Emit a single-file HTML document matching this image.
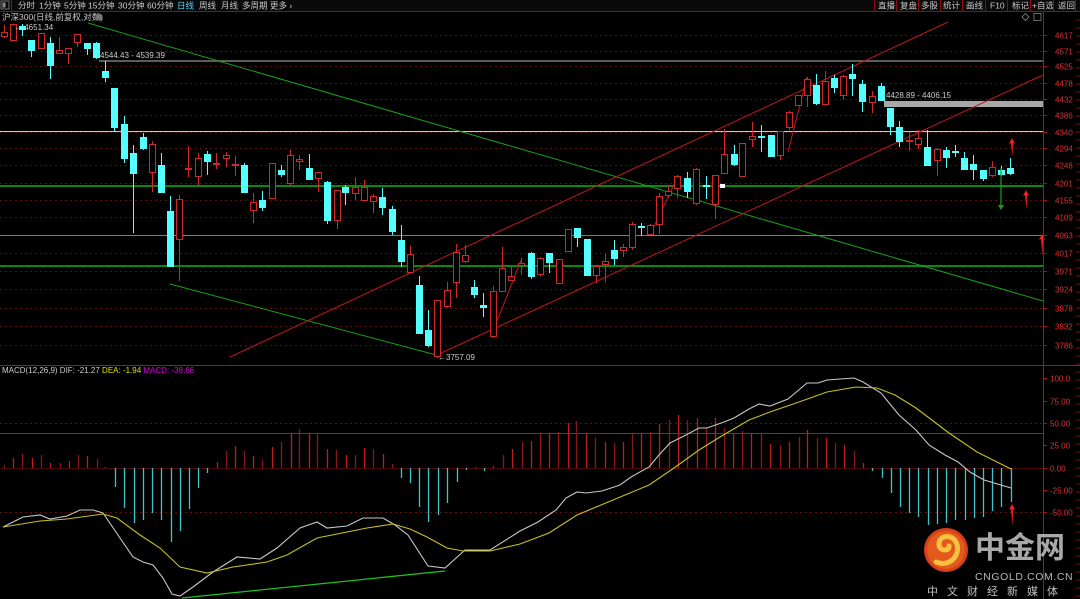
<!DOCTYPE html>
<html><head><meta charset="utf-8">
<style>
html,body{margin:0;padding:0;background:#000;}
body{width:1080px;height:599px;overflow:hidden;position:relative;font-family:"Liberation Sans","Noto Sans CJK SC",sans-serif;}
svg{position:absolute;left:0;top:0;}
</style></head>
<body>
<svg id="s" width="1080" height="599" xmlns="http://www.w3.org/2000/svg" font-family="Liberation Sans, Noto Sans CJK SC, sans-serif">
<rect width="1080" height="599" fill="#000"/>
<rect x="0" y="0" width="1080" height="11" fill="#0a0a0a"/>
<line x1="0" y1="11.5" x2="1080" y2="11.5" stroke="#8a1010"/>
<rect x="1" y="1" width="8" height="8" fill="none" stroke="#888" stroke-width="0.8"/>
<rect x="2.5" y="2.5" width="3" height="5" fill="#888"/>
<line x1="11.5" y1="0" x2="11.5" y2="11" stroke="#8a1010"/>
<g font-size="8.5" fill="#c8c8c8">
<text x="18" y="8.5">分时</text><text x="39" y="8.5">1分钟</text><text x="64" y="8.5">5分钟</text><text x="88" y="8.5">15分钟</text><text x="118" y="8.5">30分钟</text><text x="147" y="8.5">60分钟</text><text x="177" y="8.5" fill="#4fd8ff">日线</text><text x="199" y="8.5">周线</text><text x="221" y="8.5">月线</text><text x="242" y="8.5">多周期</text><text x="270" y="8.5">更多 ›</text>
<text x="878" y="8.5">直播</text><text x="900" y="8.5">复盘</text><text x="921" y="8.5">多股</text><text x="943" y="8.5">统计</text><text x="966" y="8.5">画线</text><text x="990" y="8.5">F10</text><text x="1012" y="8.5">标记</text><text x="1032" y="8.5">+自选</text><text x="1058" y="8.5">返回</text>
</g>
<g stroke="#8a1010"><line x1="874.5" y1="0" x2="874.5" y2="11"/><line x1="896.5" y1="0" x2="896.5" y2="11"/><line x1="918.5" y1="0" x2="918.5" y2="11"/><line x1="940.5" y1="0" x2="940.5" y2="11"/><line x1="962.5" y1="0" x2="962.5" y2="11"/><line x1="985.5" y1="0" x2="985.5" y2="11"/><line x1="1007.5" y1="0" x2="1007.5" y2="11"/><line x1="1030.5" y1="0" x2="1030.5" y2="11"/><line x1="1053.5" y1="0" x2="1053.5" y2="11"/><line x1="1075.5" y1="0" x2="1075.5" y2="11"/></g>
<text x="2" y="20" font-size="8.5" fill="#c8c8c8">沪深300(日线,前复权,对数)</text>
<circle cx="99" cy="17" r="3.5" fill="#777"/>
<path d="M1022 17 L1025.5 13.5 L1029 17 L1025.5 20.5Z" fill="none" stroke="#888" stroke-width="0.8"/>
<rect x="1034" y="13.5" width="7" height="7" fill="none" stroke="#888" stroke-width="0.8"/>
<g id="grid"></g>
<g id="main"></g>
<g id="macd"></g>
<line x1="1043.5" y1="12" x2="1043.5" y2="599" stroke="#b01010"/>
<line x1="0" y1="365.5" x2="1080" y2="365.5" stroke="#b01010"/>
<text x="2" y="373" font-size="8" fill="#ccc"><tspan fill="#ccc">MACD(12,26,9) DIF: -21.27 </tspan><tspan fill="#e0e000">DEA: -1.94 </tspan><tspan fill="#e000e0">MACD: -38.66</tspan></text>
<circle cx="946" cy="550" r="22" fill="#d8401a"/>
<circle cx="946" cy="550" r="19" fill="#e25a1c"/>
<path d="M936 562 C950 568 962 554 956 542 C951 533 938 536 939 545 C940 552 950 551 949 546" fill="none" stroke="#f6c040" stroke-width="5" stroke-linecap="round"/>
<text x="975" y="558" font-size="30" font-weight="bold" fill="#a8a8a8" font-family="Noto Sans CJK SC, sans-serif">中金网</text>
<text x="975" y="580" font-size="10.5" fill="#b8b8b8" letter-spacing="0.6">CNGOLD.COM.CN</text>
<text x="927" y="595" font-size="11" fill="#c0c0c0" letter-spacing="9" font-family="Noto Sans CJK SC, sans-serif">中文财经新媒体</text>
</svg>
<script>
var NS="http://www.w3.org/2000/svg";
function el(p,t,a,txt){var e=document.createElementNS(NS,t);for(var k in a)e.setAttribute(k,a[k]);if(txt!==undefined)e.textContent=txt;document.getElementById(p).appendChild(e);return e;}
var pl=[[4617,35],[4571,50.6],[4525,66.4],[4478,82.7],[4432,98.9],[4386,115.2],[4340,131.6],[4294,148.3],[4248,165.1],[4201,182.5],[4155,199.7],[4109,217],[4063,234.8],[4017,252.5],[3971,270.5],[3924,289],[3878,307.6],[3832,326.2],[3786,345]];
pl.forEach(function(p){var y=Math.round(p[1])+0.5;
el('grid','line',{x1:0,y1:y,x2:1043,y2:y,stroke:'#5a0c0c','stroke-dasharray':'2,3'});
el('grid','line',{x1:1043,y1:y,x2:1047,y2:y,stroke:'#b01010'});
el('grid','text',{x:1055,y:y+3,'font-size':8,fill:'#e03030'},String(p[0]));});
var ml=[[100,378],[75,401],[50,423],[25,445],['0.00',468],[-25,490],[-50,512]];
ml.forEach(function(p){var y=p[1]+0.5;var lab=(typeof p[0]==='string')?p[0]:p[0].toFixed(2).replace('100.00','100.0');
if(p[0]===50||p[0]===-50)el('grid','line',{x1:0,y1:y,x2:1043,y2:y,stroke:'#6a0c0c','stroke-dasharray':'2,3'});
if(p[0]==='0.00')el('grid','line',{x1:0,y1:y,x2:1043,y2:y,stroke:'#4a0808'});
el('grid','line',{x1:1043,y1:y,x2:1047,y2:y,stroke:'#b01010'});
el('grid','text',{x:1050,y:y+3,'font-size':8,fill:'#e03030'},lab);});
el('grid','line',{x1:0,y1:433.5,x2:1043,y2:433.5,stroke:'#c01010'});
el('main','line',{x1:99,y1:61,x2:1043,y2:61,stroke:'#7a7a7a','stroke-width':1.5});
el('main','rect',{x:884,y:101,width:159,height:6,fill:'#a8a8a8'});
el('main','line',{x1:0,y1:131.5,x2:1043,y2:131.5,stroke:'#d8d090'});
el('main','line',{x1:0,y1:186,x2:1043,y2:186,stroke:'#0a8a0a','stroke-width':2});
el('main','line',{x1:0,y1:235.5,x2:1043,y2:235.5,stroke:'#30b030'});
el('main','line',{x1:0,y1:266,x2:1043,y2:266,stroke:'#0a8a0a','stroke-width':2});
el('main','line',{x1:88,y1:23,x2:1043,y2:301,stroke:'#18a018'});
el('main','line',{x1:170,y1:284,x2:440,y2:356,stroke:'#18a018'});
el('main','line',{x1:230,y1:357,x2:948,y2:22,stroke:'#c01818'});
el('main','line',{x1:437,y1:355,x2:1043,y2:75,stroke:'#c01818'});
el('main','line',{x1:493,y1:331,x2:522,y2:258,stroke:'#c01818'});
el('main','line',{x1:650,y1:235,x2:678,y2:176,stroke:'#c01818'});
el('main','line',{x1:788,y1:152,x2:807,y2:77,stroke:'#c01818'});
var C=[[4,'r',32,36,25,38],[13,'r',24,40,24,41],[22,'c',26,29,24,36],[31,'c',40,50,40,57],[41,'r',33,48,33,48],[50,'c',43,65,37,79],[59,'r',50,53,37,53],[68,'r',48,53,48,64],[77,'r',34,42,34,47],[87,'c',43,48,43,55],[96,'c',43,57,42,59],[105,'c',71,77,61,82],[114,'c',88,127,88,132],[124,'c',124,158,116,163],[133,'c',153,173,145,233],[143,'c',137,148,133,150],[152,'r',144,172,141,192],[161,'c',165,192,153,193],[170,'c',211,266,196,266],[179,'r',199,239,195,281],[188,'r',168,169,146,177],[198,'r',158,176,153,185],[207,'c',154,161,151,175],[216,'r',163,164,153,169],[226,'r',155,158,152,167],[235,'r',164,165,156,176],[244,'c',165,192,163,192],[253,'r',202,210,193,223],[262,'c',200,207,191,211],[272,'r',163,198,163,198],[281,'c',170,174,165,177],[290,'r',155,183,150,186],[299,'r',159,161,155,170],[309,'c',168,179,154,180],[318,'r',172,178,172,192],[327,'c',182,220,181,224],[337,'r',190,220,190,229],[345,'c',187,192,185,205],[355,'r',187,193,177,200],[364,'r',187,200,180,200],[373,'r',196,201,194,213],[382,'c',197,207,188,215],[392,'c',209,231,206,235],[401,'c',240,261,225,267],[410,'r',254,272,246,274],[419,'c',285,333,276,333],[428,'c',330,345,310,347],[437,'r',300,356,300,358],[447,'r',290,306,282,308],[456,'r',252,282,244,298],[465,'r',255,261,245,263],[474,'c',287,294,280,298],[483,'c',305,307,293,317],[493,'r',291,336,286,338],[502,'r',268,291,247,292],[511,'r',276,280,266,280],[521,'r',263,265,258,275],[531,'c',253,276,252,279],[540,'r',258,274,257,276],[549,'c',253,262,253,273],[559,'r',259,283,259,283],[568,'r',229,251,229,251],[577,'c',228,237,228,247],[587,'c',239,275,239,275],[596,'r',266,275,266,283],[605,'r',261,264,254,282],[614,'c',250,258,240,265],[623,'r',247,250,244,257],[632,'r',224,247,222,250],[641,'c',226,227,223,236],[650,'r',225,234,224,235],[659,'r',196,224,193,234],[668,'r',191,195,185,198],[677,'r',176,188,175,198],[687,'c',178,191,172,198],[696,'r',169,203,168,205],[706,'c',185,186,176,199],[715,'r',175,204,175,219],[724,'r',154,173,129,173],[734,'c',154,164,145,166],[742,'r',143,176,143,176],[752,'r',136,139,122,147],[761,'c',136,137,125,152],[771,'c',135,156,135,156],[780,'r',131,155,131,160],[789,'r',112,127,111,130],[798,'r',95,105,95,105],[807,'r',79,95,77,107],[816,'c',85,103,74,105],[825,'r',81,104,71,105],[834,'c',78,87,75,93],[843,'r',76,95,75,100],[852,'c',74,78,64,96],[862,'c',84,101,80,112],[872,'r',96,102,91,113],[881,'c',86,100,83,100],[890,'c',108,126,108,135],[899,'c',127,141,121,147],[909,'r',140,141,132,151],[918,'r',138,144,130,149],[927,'c',147,165,130,165],[937,'r',149,160,148,176],[946,'c',150,157,147,168],[955,'c',151,152,145,157],[964,'c',158,169,152,170],[973,'c',164,169,155,180],[983,'c',170,178,170,181],[992,'r',167,175,161,177],[1001,'c',170,174,166,176],[1010,'c',168,173,158,175]];
C.forEach(function(c){var x=c[0],col=c[1]=='r'?'#d02828':'#54ffff';
el('main','line',{x1:x+0.5,y1:c[4],x2:x+0.5,y2:c[5],stroke:col});
var h=Math.max(1,c[3]-c[2]);
if(c[1]=='r')el('main','rect',{x:x-2.5,y:c[2]+0.5,width:6,height:h,fill:'#000',stroke:col});
else el('main','rect',{x:x-3,y:c[2],width:7,height:h+1,fill:col});});
el('main','rect',{x:720,y:184,width:5,height:4,fill:'#fff'});
el('main','text',{x:14,y:30,'font-size':8,fill:'#ccc'},'← 4651.34');
el('main','text',{x:100,y:58,'font-size':8,fill:'#ccc'},'4544.43 - 4539.39');
el('main','text',{x:886,y:98,'font-size':8,fill:'#ccc'},'4428.89 - 4406.15');
el('main','text',{x:438,y:360,'font-size':8,fill:'#ccc'},'←3757.09');
el('main','line',{x1:1001,y1:168,x2:1001,y2:208,stroke:'#18a018','stroke-width':1.2});
el('main','path',{d:'M998 205 L1001 210 L1004 205Z',fill:'#18a018'});
function arrow(x,y1,y2){el('main','path',{d:'M'+(x-3)+' '+(y1+6)+' L'+x+' '+y1+' L'+(x+3)+' '+(y1+6)+' L'+(x+1)+' '+(y1+5)+' L'+(x+0.5)+' '+y2+' L'+(x-1)+' '+(y1+5)+'Z',fill:'#ff2020'});}
arrow(1012,138,157);arrow(1026,190,210);arrow(1042,234,256);arrow(1012,504,526);
var H=[[4,465],[13,458],[22,454],[32,458],[41,455],[50,463],[60,463],[69,461],[78,455],[87,456],[97,459],[105,467],[115,487],[124,508],[134,523],[143,520],[152,513],[161,520],[171,542],[180,531],[189,509],[198,488],[207,473],[217,462],[226,451],[235,446],[244,451],[253,456],[262,460],[272,447],[281,442],[291,433],[299,429],[309,433],[317,433],[327,449],[336,450],[346,455],[355,455],[364,448],[373,449],[383,454],[392,464],[401,478],[410,483],[419,507],[428,522],[438,515],[447,503],[457,482],[466,470],[475,467],[484,471],[493,466],[503,455],[512,449],[522,442],[531,441],[540,434],[549,433],[558,432],[568,423],[576,421],[586,433],[595,438],[605,442],[614,443],[623,442],[632,434],[641,433],[650,432],[659,424],[669,420],[678,415],[687,420],[697,418],[706,427],[715,418],[724,428],[733,433],[742,431],[751,434],[761,434],[770,444],[780,445],[789,442],[799,437],[807,430],[817,438],[826,438],[835,443],[844,445],[854,451],[863,463],[872,471],[882,478],[891,493],[900,507],[909,513],[918,517],[928,525],[937,524],[946,523],[955,520],[965,520],[974,518],[983,517],[992,511],[1001,507],[1011,502]];
H.forEach(function(h,i){var up=h[1]<468;var col=up?(i%2?'#c01c1c':'#8a1818'):'#40c4c8';
el('macd','line',{x1:h[0]+0.5,y1:468,x2:h[0]+0.5,y2:h[1],stroke:col,'stroke-width':1.3});});
function pl2(pts,col){el('macd','polyline',{points:pts.map(function(p){return p.join(',')}).join(' '),fill:'none',stroke:col,'stroke-width':1.1});}
pl2([[3,527],[23,517],[40,515],[50,519],[67,516],[80,510],[93,510],[103,513],[120,538],[133,557],[143,562],[153,565],[163,578],[172,594],[180,596],[193,587],[213,572],[237,557],[260,559],[277,548],[300,528],[317,522],[327,528],[347,526],[363,518],[383,518],[395,525],[408,535],[428,566],[445,568],[465,550],[490,550],[520,531],[538,522],[556,510],[566,498],[577,492],[586,493],[602,491],[620,485],[631,477],[649,467],[659,455],[670,443],[684,436],[699,428],[707,428],[724,422],[734,418],[749,409],[759,404],[770,406],[788,399],[807,383],[818,383],[827,380],[854,378],[863,382],[881,393],[899,415],[916,430],[929,445],[945,455],[958,462],[970,472],[984,480],[1011,488]],'#c8c8c8');
pl2([[3,527],[40,521],[67,519],[103,514],[117,518],[140,535],[160,548],[180,567],[207,573],[233,567],[267,562],[287,555],[317,538],[367,528],[393,524],[410,529],[427,537],[447,548],[463,551],[490,551],[520,544],[549,533],[577,515],[613,500],[649,485],[674,468],[699,450],[720,437],[749,420],[770,412],[799,402],[827,392],[856,387],[877,388],[895,395],[916,408],[949,433],[977,452],[1011,469]],'#c8c020');
el('macd','line',{x1:182,y1:598,x2:445,y2:571,stroke:'#20c020','stroke-width':1.3});
for(var y=20;y<599;y+=8)el('macd','line',{x1:1076,y1:y,x2:1080,y2:y,stroke:'#7a1010'});
</script>
</body></html>
